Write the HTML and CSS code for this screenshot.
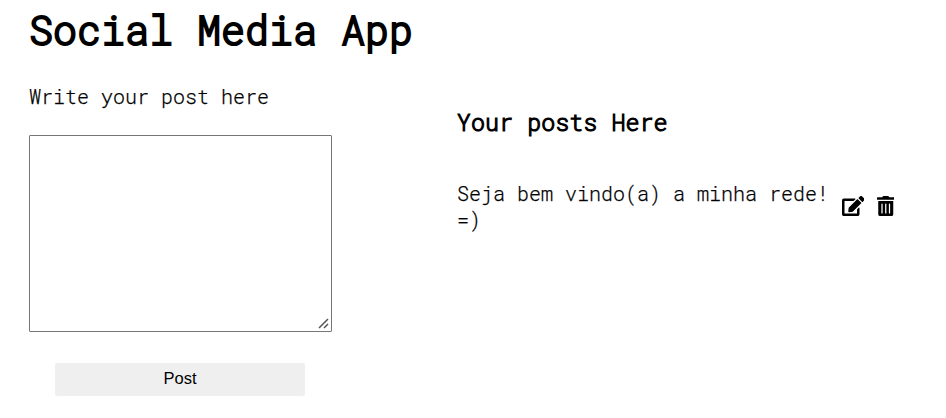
FILE: index.html
```html
<!DOCTYPE html>
<html lang="en">
<head>
<meta charset="utf-8">
<title>Social Media App</title>
<link rel="stylesheet" href="styles.css">
</head>
<body>
<h1>Social Media App</h1>
<main class="container">
  <form class="left">
    <label for="post">Write your post here</label>
    <div class="field">
      <textarea id="post"></textarea>
      <svg class="grip" viewBox="0 0 11 11"><path d="M1 10L10 1M6 10L10 6"/></svg>
    </div>
    <button type="button">Post</button>
  </form>
  <section class="right">
    <h3>Your posts Here</h3>
    <div class="post">
      <p>Seja bem vindo(a) a minha rede! =)</p>
      <span class="options">
        <svg class="edit" viewBox="0 0 576 512"><path d="M402.6 83.2l90.2 90.2c3.8 3.8 3.8 10 0 13.8L274.4 405.6l-92.8 10.3c-12.4 1.4-22.9-9.1-21.5-21.5l10.3-92.8L388.8 83.2c3.8-3.8 10-3.8 13.8 0zm162-22.9l-48.8-48.8c-15.2-15.2-39.9-15.2-55.2 0l-35.4 35.4c-3.8 3.8-3.8 10 0 13.8l90.2 90.2c3.8 3.8 10 3.8 13.8 0l35.4-35.4c15.2-15.3 15.2-40 0-55.2zM384 346.2V448H64V128h229.8c3.2 0 6.2-1.3 8.5-3.5l40-40c7.6-7.6 2.2-20.5-8.5-20.5H48C21.5 64 0 85.5 0 112v352c0 26.5 21.5 48 48 48h352c26.5 0 48-21.5 48-48V306.2c0-10.7-12.9-16-20.5-8.5l-40 40c-2.2 2.3-3.5 5.3-3.5 8.5z"/></svg>
        <svg class="trash" viewBox="0 0 448 512"><path d="M32 464a48 48 0 0 0 48 48h288a48 48 0 0 0 48-48V128H32zm272-256a16 16 0 0 1 32 0v224a16 16 0 0 1-32 0zm-96 0a16 16 0 0 1 32 0v224a16 16 0 0 1-32 0zm-96 0a16 16 0 0 1 32 0v224a16 16 0 0 1-32 0zM432 32H312l-9.4-18.7A24 24 0 0 0 281.1 0H166.8a23.72 23.72 0 0 0-21.4 13.3L136 32H16A16 16 0 0 0 0 48v32a16 16 0 0 0 16 16h416a16 16 0 0 0 16-16V48a16 16 0 0 0-16-16z"/></svg>
      </span>
    </div>
  </section>
</main>
</body>
</html>
```
FILE: styles.css
```css
* { box-sizing: border-box; }

body {
  margin: 0;
  padding: 3px 29px 0;
  background: #fff;
  color: #000;
  font-family: "Roboto Mono", "DejaVu Sans Mono", monospace;
  font-size: 20px;
  font-weight: 300;
  line-height: 26px;
  overflow: hidden;
}

label,
p { -webkit-text-stroke: 0.25px #000; }

h1 {
  margin: 0;
  font-size: 40px;
  font-weight: 300;
  line-height: 53px;
  -webkit-text-stroke: 2.1px #000;
}

.container { display: flex; }

.left {
  display: flex;
  flex-direction: column;
  width: 303px;
  margin-right: 125px;
  padding-top: 27px;
}

.field {
  position: relative;
  height: 197px;
  margin: 26px 0 31px;
}

textarea {
  display: block;
  width: 303px;
  height: 197px;
  border: 1px solid #767676;
  border-radius: 1px;
  resize: none;
}

.grip {
  position: absolute;
  right: 3px;
  bottom: 3px;
  width: 11px;
  height: 11px;
  fill: none;
  stroke: #555;
  stroke-width: 1.5;
}

button {
  width: 250px;
  height: 33px;
  margin-left: 26px;
  padding: 0 0 2px;
  border: 0;
  border-radius: 2px;
  background: #efefef;
  color: #000;
  font: 16.5px "Liberation Sans", Arial, sans-serif;
}

.right { width: 437px; padding-top: 50px; }

h3 {
  margin: 0;
  font-size: 23.4px;
  font-weight: 300;
  line-height: 31px;
  -webkit-text-stroke: 1.15px #000;
}

.post {
  display: flex;
  align-items: center;
  justify-content: space-between;
  margin-top: 43px;
}

p { width: 376px; margin: 0; }

.options { display: flex; gap: 12.5px; padding-bottom: 1px; }

svg { display: block; height: 20px; }

.edit { width: 22.5px; }

.trash { width: 17.5px; }
```
